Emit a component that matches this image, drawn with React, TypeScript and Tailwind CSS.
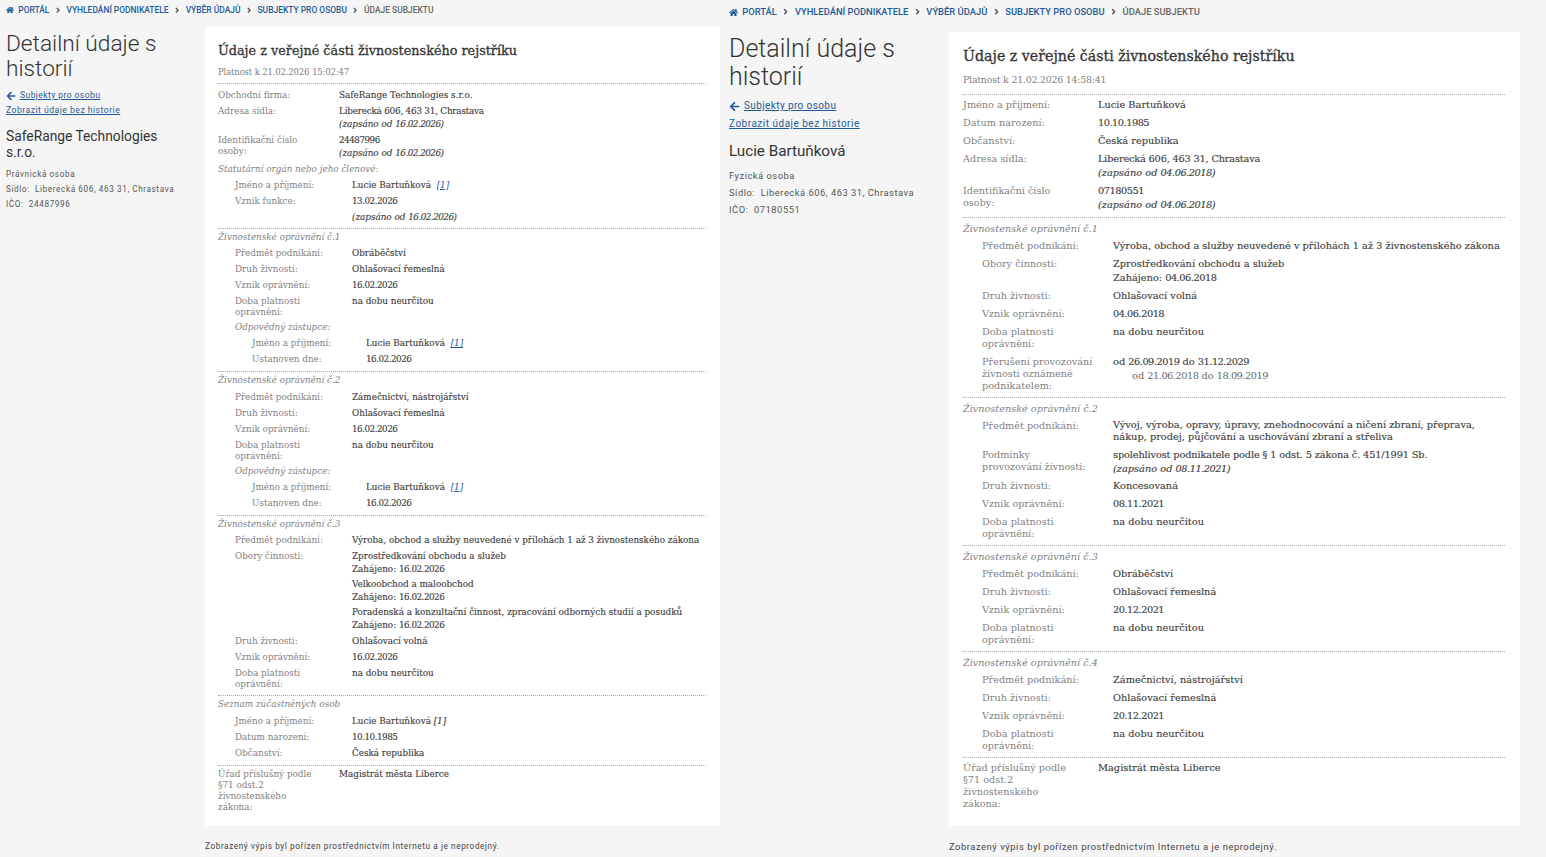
import type { ReactNode } from 'react';
import { FaAngleRight, FaArrowLeft, FaHome } from 'react-icons/fa';

type Theme = {
  page: string;
  crumbs: string;
  crumbGap: string;
  home: string;
  side: string;
  h1: string;
  back: string;
  arrow: string;
  link: string;
  name: string;
  meta: string;
  card: string;
  title: string;
  valid: string;
  firstBlock: string;
  officeBlock: string;
  block: string;
  heading: string;
  subheading: string;
  label: string[];
  value: string;
  footer: string;
};

const small: Theme = {
  page: 'w-[720px]',
  crumbs: 'mb-[7px] h-[20px] pl-[6px] text-[8.45px] leading-[11px]',
  crumbGap: 'gap-[4.3px]',
  home: 'text-[8px]',
  side: 'w-[205px] pl-[6px] pr-[30px]',
  h1: 'mt-[4px] text-[22.7px] leading-[25px]',
  back: 'mt-[7px] text-[8.6px] leading-[15px] gap-[4px]',
  arrow: 'text-[10px]',
  link: 'text-[8.6px] leading-[15px]',
  name: 'mt-[10px] text-[13.8px] leading-[16px]',
  meta: 'mt-[7px] text-[8.2px] leading-[15px] tracking-[0.6px]',
  card: 'h-[799px] w-[515px] pl-[13px] pr-[14px] pt-[17px]',
  title: 'text-[12.8px] leading-[14px]',
  valid: 'mt-[8px] pb-[5px] text-[8.5px] leading-[12px] tracking-[-0.15px]',
  firstBlock: 'pt-[5px] pb-[1px]',
  officeBlock: 'pt-[2px]',
  block: 'pb-[2px]',
  heading: 'pt-[2px] pb-[3.5px] text-[8.8px] leading-[13px]',
  subheading: 'pb-[2.5px] text-[8.8px] leading-[13px]',
  label: [
    'w-[121px] pt-px pb-[3px] text-[8.8px] leading-[11px]',
    'w-[134px] pl-[17px] pt-px pb-[3px] text-[8.8px] leading-[11px]',
    'w-[148px] pl-[34px] pt-px pb-[3px] text-[8.8px] leading-[11px]',
  ],
  value: 'pb-[3px] text-[8.8px] leading-[13px]',
  footer: 'mt-[14px] text-[8.2px] leading-[12px] tracking-[0.6px]',
};

const large: Theme = {
  page: 'w-[826px]',
  crumbs: 'mb-[8px] h-[24px] pl-[9px] text-[9.4px] leading-[12px]',
  crumbGap: 'gap-[4.3px]',
  home: 'text-[9px]',
  side: 'w-[229px] pl-[9px]',
  h1: 'mt-[3px] text-[25px] leading-[28px]',
  back: 'mt-[6px] text-[10px] leading-[18px] gap-[4px]',
  arrow: 'text-[11px]',
  link: 'text-[10px] leading-[18px]',
  name: 'mt-[9px] text-[15.2px] leading-[18px]',
  meta: 'mt-[7px] text-[9.4px] leading-[17px] tracking-[0.5px]',
  card: 'h-[794px] w-[571px] pl-[14px] pr-[15px] pt-[16px]',
  title: 'text-[14.2px] leading-[16px]',
  valid: 'mt-[9px] pb-[7px] text-[9.4px] leading-[14px] tracking-[-0.2px]',
  firstBlock: 'pt-[3px] pb-[2px]',
  officeBlock: 'pt-[3px]',
  block: '',
  heading: 'pt-[4px] pb-[3px] text-[9.7px] leading-[14px]',
  subheading: 'pb-[3px] text-[9.7px] leading-[14px]',
  label: [
    'w-[135px] pt-px pb-[5px] text-[9.7px] leading-[12px]',
    'w-[150px] pl-[19px] pt-px pb-[5px] text-[9.7px] leading-[12px]',
    'w-[150px] pl-[19px] pt-px pb-[5px] text-[9.7px] leading-[12px]',
  ],
  value: 'pb-[3.7px] text-[9.8px] leading-[14px]',
  footer: 'mt-[15px] text-[9.4px] leading-[12px] tracking-[0.55px]',
};

function Row({ t, label, depth = 0, children }: { t: Theme; label: string; depth?: 0 | 1 | 2; children?: ReactNode }) {
  return (
    <div className="flex items-start">
      <div className={`shrink-0 whitespace-pre-line text-[#808080] ${t.label[depth]}`}>{label}</div>
      <div className={`min-w-0 flex-1 text-[#404040] [-webkit-text-stroke:0.15px_#404040] ${t.value}`}>{children}</div>
    </div>
  );
}

// DejaVu digits run wider than the reference's, so numbers get pulled in
function Num({ children }: { children: ReactNode }) {
  return <span className="tracking-[-0.5px]">{children}</span>;
}

function Address() {
  return <span className="tracking-[-0.2px]">Liberecká 606, 463 31, Chrastava</span>;
}

function Since({ date }: { date: string }) {
  return (
    <div className="italic">
      (zapsáno od <Num>{date}</Num>)
    </div>
  );
}

function Started({ date }: { date: string }) {
  return (
    <div>
      Zahájeno: <Num>{date}</Num>
    </div>
  );
}

function Ref({ plain }: { plain?: boolean }) {
  return plain ? (
    <span className="italic"> [1]</span>
  ) : (
    <span className="ml-[3px] text-[#1f5a96] italic underline [-webkit-text-stroke:0]">[1]</span>
  );
}

function Block({ t, title, kind, children }: { t: Theme; title?: string; kind?: 'first' | 'office'; children: ReactNode }) {
  const spacing = kind === 'first' ? t.firstBlock : kind === 'office' ? t.officeBlock : t.block;
  return (
    <div className={`border-t border-dotted border-[#aaa] ${spacing}`}>
      {title && <div className={`text-[#808080] italic ${t.heading}`}>{title}</div>}
      {children}
    </div>
  );
}

function Crumbs({ t }: { t: Theme }) {
  const items = ['Portál', 'Vyhledání podnikatele', 'Výběr údajů', 'Subjekty pro osobu'];
  return (
    <nav className={`flex items-center self-start font-["Roboto",sans-serif] font-medium uppercase ${t.crumbs} ${t.crumbGap}`}>
      <FaHome className={`text-[#1f5a96] ${t.home}`} />
      {items.map((item) => (
        <span key={item} className={`flex items-center ${t.crumbGap}`}>
          <a className="text-[#1f5a96]">{item}</a>
          <FaAngleRight className="text-[#555]" />
        </span>
      ))}
      <span className="text-[#666]">Údaje subjektu</span>
    </nav>
  );
}

function Sidebar({ t, name, kind, ico }: { t: Theme; name: string; kind: string; ico: string }) {
  return (
    <aside className={`shrink-0 font-["Roboto",sans-serif] ${t.side}`}>
      <h1 className={`font-light text-[#333] ${t.h1}`}>Detailní údaje s historií</h1>
      <div className={`flex items-center text-[#1f5a96] ${t.back}`}>
        <FaArrowLeft className={t.arrow} />
        <a className="tracking-[0.4px] underline">Subjekty pro osobu</a>
      </div>
      <a className={`block tracking-[0.5px] whitespace-nowrap text-[#1f5a96] underline ${t.link}`}>Zobrazit údaje bez historie</a>
      <h2 className={`font-normal text-[#333] ${t.name}`}>{name}</h2>
      <div className={`whitespace-nowrap text-[#555] ${t.meta}`}>
        <div>{kind}</div>
        <div>Sídlo:&nbsp; Liberecká 606, 463 31, Chrastava</div>
        <div>IČO:&nbsp; {ico}</div>
      </div>
    </aside>
  );
}

function Page({ t, sidebar, valid, children }: { t: Theme; sidebar: ReactNode; valid: string; children: ReactNode }) {
  return (
    <section className={`flex shrink-0 flex-col ${t.page}`}>
      <Crumbs t={t} />
      <div className="flex">
        {sidebar}
        <div>
          <main className={`bg-white font-["DejaVu_Serif",serif] ${t.card}`}>
            <h3 className={`text-[#333] [-webkit-text-stroke:0.3px_#333] ${t.title}`}>Údaje z veřejné části živnostenského rejstříku</h3>
            <p className={`text-[#808080] ${t.valid}`}>Platnost k {valid}</p>
            {children}
          </main>
          <p className={`font-["Roboto",sans-serif] text-[#444] ${t.footer}`}>
            Zobrazený výpis byl pořízen prostřednictvím Internetu a je neprodejný.
          </p>
        </div>
      </div>
    </section>
  );
}

function CompanyPage() {
  const t = small;
  const person = (
    <>
      Lucie Bartuňková <Ref />
    </>
  );
  return (
    <Page
      t={t}
      valid="21.02.2026 15:02:47"
      sidebar={<Sidebar t={t} name="SafeRange Technologies s.r.o." kind="Právnická osoba" ico="24487996" />}
    >
      <Block t={t} kind="first">
        <Row t={t} label="Obchodní firma:">SafeRange Technologies s.r.o.</Row>
        <Row t={t} label="Adresa sídla:">
          <Address />
          <Since date="16.02.2026" />
        </Row>
        <Row t={t} label={'Identifikační číslo\nosoby:'}>
          <Num>24487996</Num>
          <Since date="16.02.2026" />
        </Row>
        <div className={`text-[#808080] italic ${t.subheading}`}>Statutární orgán nebo jeho členové:</div>
        <Row t={t} depth={1} label="Jméno a příjmení:">{person}</Row>
        <Row t={t} depth={1} label="Vznik funkce:"><Num>13.02.2026</Num></Row>
        <Row t={t} depth={1} label=" "><Since date="16.02.2026" /></Row>
      </Block>
      <Block t={t} title="Živnostenské oprávnění č.1">
        <Row t={t} depth={1} label="Předmět podnikání:">Obráběčství</Row>
        <Row t={t} depth={1} label="Druh živnosti:">Ohlašovací řemeslná</Row>
        <Row t={t} depth={1} label="Vznik oprávnění:"><Num>16.02.2026</Num></Row>
        <Row t={t} depth={1} label={'Doba platnosti\noprávnění:'}>na dobu neurčitou</Row>
        <div className={`pl-[17px] text-[#808080] italic ${t.value}`}>Odpovědný zástupce:</div>
        <Row t={t} depth={2} label="Jméno a příjmení:">{person}</Row>
        <Row t={t} depth={2} label="Ustanoven dne:"><Num>16.02.2026</Num></Row>
      </Block>
      <Block t={t} title="Živnostenské oprávnění č.2">
        <Row t={t} depth={1} label="Předmět podnikání:">Zámečnictví, nástrojářství</Row>
        <Row t={t} depth={1} label="Druh živnosti:">Ohlašovací řemeslná</Row>
        <Row t={t} depth={1} label="Vznik oprávnění:"><Num>16.02.2026</Num></Row>
        <Row t={t} depth={1} label={'Doba platnosti\noprávnění:'}>na dobu neurčitou</Row>
        <div className={`pl-[17px] text-[#808080] italic ${t.value}`}>Odpovědný zástupce:</div>
        <Row t={t} depth={2} label="Jméno a příjmení:">{person}</Row>
        <Row t={t} depth={2} label="Ustanoven dne:"><Num>16.02.2026</Num></Row>
      </Block>
      <Block t={t} title="Živnostenské oprávnění č.3">
        <Row t={t} depth={1} label="Předmět podnikání:">Výroba, obchod a služby neuvedené v přílohách 1 až 3 živnostenského zákona</Row>
        <Row t={t} depth={1} label="Obory činnosti:">
          <div>Zprostředkování obchodu a služeb</div>
          <Started date="16.02.2026" />
          <div className="mt-[2px]">Velkoobchod a maloobchod</div>
          <Started date="16.02.2026" />
          <div className="mt-[2px]">Poradenská a konzultační činnost, zpracování odborných studií a posudků</div>
          <Started date="16.02.2026" />
        </Row>
        <Row t={t} depth={1} label="Druh živnosti:">Ohlašovací volná</Row>
        <Row t={t} depth={1} label="Vznik oprávnění:"><Num>16.02.2026</Num></Row>
        <Row t={t} depth={1} label={'Doba platnosti\noprávnění:'}>na dobu neurčitou</Row>
      </Block>
      <Block t={t} title="Seznam zúčastněných osob">
        <Row t={t} depth={1} label="Jméno a příjmení:">
          Lucie Bartuňková
          <Ref plain />
        </Row>
        <Row t={t} depth={1} label="Datum narození:"><Num>10.10.1985</Num></Row>
        <Row t={t} depth={1} label="Občanství:">Česká republika</Row>
      </Block>
      <Block t={t} kind="office">
        <Row t={t} label={'Úřad příslušný podle\n§71 odst.2\nživnostenského\nzákona:'}>Magistrát města Liberce</Row>
      </Block>
    </Page>
  );
}

function PersonPage() {
  const t = large;
  return (
    <Page
      t={t}
      valid="21.02.2026 14:58:41"
      sidebar={<Sidebar t={t} name="Lucie Bartuňková" kind="Fyzická osoba" ico="07180551" />}
    >
      <Block t={t} kind="first">
        <Row t={t} label="Jméno a příjmení:">Lucie Bartuňková</Row>
        <Row t={t} label="Datum narození:"><Num>10.10.1985</Num></Row>
        <Row t={t} label="Občanství:">Česká republika</Row>
        <Row t={t} label="Adresa sídla:">
          <Address />
          <Since date="04.06.2018" />
        </Row>
        <Row t={t} label={'Identifikační číslo\nosoby:'}>
          <Num>07180551</Num>
          <Since date="04.06.2018" />
        </Row>
      </Block>
      <Block t={t} title="Živnostenské oprávnění č.1">
        <Row t={t} depth={1} label="Předmět podnikání:">Výroba, obchod a služby neuvedené v přílohách 1 až 3 živnostenského zákona</Row>
        <Row t={t} depth={1} label="Obory činnosti:">
          <div>Zprostředkování obchodu a služeb</div>
          <Started date="04.06.2018" />
        </Row>
        <Row t={t} depth={1} label="Druh živnosti:">Ohlašovací volná</Row>
        <Row t={t} depth={1} label="Vznik oprávnění:"><Num>04.06.2018</Num></Row>
        <Row t={t} depth={1} label={'Doba platnosti\noprávnění:'}>na dobu neurčitou</Row>
        <Row t={t} depth={1} label={'Přerušení provozování\nživnosti oznámené\npodnikatelem:'}>
          <div>
            od <Num>26.09.2019</Num> do <Num>31.12.2029</Num>
          </div>
          <div className="pl-[19px] text-[#666] [-webkit-text-stroke:0]">
            od <Num>21.06.2018</Num> do <Num>18.09.2019</Num>
          </div>
        </Row>
      </Block>
      <Block t={t} title="Živnostenské oprávnění č.2">
        <Row t={t} depth={1} label="Předmět podnikání:">
          <div className="pb-px leading-[12px]">
            Vývoj, výroba, opravy, úpravy, znehodnocování a ničení zbraní, přeprava,
            <br />
            nákup, prodej, půjčování a uschovávání zbraní a střeliva
          </div>
        </Row>
        <Row t={t} depth={1} label={'Podmínky\nprovozování živnosti:'}>
          <span className="tracking-[-0.15px]">spolehlivost podnikatele podle § 1 odst. 5 zákona č. 451/1991 Sb.</span>
          <Since date="08.11.2021" />
        </Row>
        <Row t={t} depth={1} label="Druh živnosti:">Koncesovaná</Row>
        <Row t={t} depth={1} label="Vznik oprávnění:"><Num>08.11.2021</Num></Row>
        <Row t={t} depth={1} label={'Doba platnosti\noprávnění:'}>na dobu neurčitou</Row>
      </Block>
      <Block t={t} title="Živnostenské oprávnění č.3">
        <Row t={t} depth={1} label="Předmět podnikání:">Obráběčství</Row>
        <Row t={t} depth={1} label="Druh živnosti:">Ohlašovací řemeslná</Row>
        <Row t={t} depth={1} label="Vznik oprávnění:"><Num>20.12.2021</Num></Row>
        <Row t={t} depth={1} label={'Doba platnosti\noprávnění:'}>na dobu neurčitou</Row>
      </Block>
      <Block t={t} title="Živnostenské oprávnění č.4">
        <Row t={t} depth={1} label="Předmět podnikání:">Zámečnictví, nástrojářství</Row>
        <Row t={t} depth={1} label="Druh živnosti:">Ohlašovací řemeslná</Row>
        <Row t={t} depth={1} label="Vznik oprávnění:"><Num>20.12.2021</Num></Row>
        <Row t={t} depth={1} label={'Doba platnosti\noprávnění:'}>na dobu neurčitou</Row>
      </Block>
      <Block t={t} kind="office">
        <Row t={t} label={'Úřad příslušný podle\n§71 odst.2\nživnostenského\nzákona:'}>Magistrát města Liberce</Row>
      </Block>
    </Page>
  );
}

export default function App() {
  return (
    <div className="flex h-[857px] w-[1546px] overflow-hidden bg-[#f5f5f5]">
      <CompanyPage />
      <PersonPage />
    </div>
  );
}
